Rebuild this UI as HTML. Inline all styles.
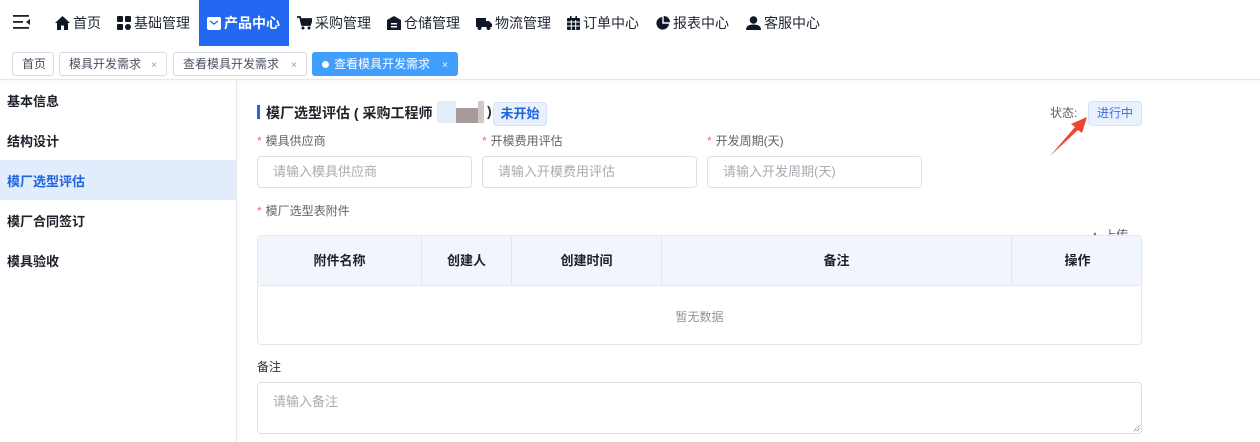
<!DOCTYPE html>
<html><head><meta charset="utf-8"><style>
*{margin:0;padding:0;box-sizing:border-box}
body{width:1260px;height:442px;overflow:hidden;background:#fff;font-family:"Liberation Sans","Noto Sans CJK SC",sans-serif;position:relative;color:#303133}
.a{position:absolute}
.nav{font-size:14px;color:#1f2530;top:0;height:46px;line-height:44px;display:flex;align-items:center}
.nav svg{margin-right:3px;vertical-align:-2px}
.tab{position:absolute;top:52px;height:24px;border:1px solid #d8dce5;border-radius:3px;font-size:12px;line-height:22px;color:#495060;padding-left:9px;background:#fff}
.tab .x{position:absolute;right:9px;top:2px;font-size:10px;color:#999}
.side{font-size:13px;font-weight:bold;color:#1d2129;left:7px}
.lbl{font-size:12px;color:#606266;top:132px}
.lbl b{color:#f56c6c;font-weight:normal;margin-right:4px}
.inp{top:156px;width:215px;height:32px;border:1px solid #dcdfe6;border-radius:4px;font-size:13px;color:#a8abb2;line-height:30px;padding-left:15px}
.th{top:235px;height:50px;line-height:50px;font-size:13px;font-weight:bold;color:#1d2129;text-align:center;border-right:1px solid #e4e7ed;background:#f1f5fc}
</style></head><body>
<div class="a" style="left:13px;top:15px">
<svg width="18" height="14" viewBox="0 0 18 14"><rect x="0" y="0" width="16" height="1.8" fill="#222"/><rect x="0" y="6" width="10" height="1.8" fill="#222"/><rect x="0" y="12" width="16" height="1.8" fill="#222"/><path d="M17 4 L13 7 L17 10Z" fill="#222"/></svg></div>
<div class="a nav" style="left:55px"><svg width="15" height="14" viewBox="0 0 15 14"><path d="M7.5 0 L15 7 H13 V14 H9 V9.5 H6 V14 H2 V7 H0Z" fill="#101828"/></svg>首页</div>
<div class="a nav" style="left:117px"><svg width="14" height="14" viewBox="0 0 14 14"><rect x="0" y="0" width="6" height="6" rx="1" fill="#101828"/><rect x="8" y="0" width="6" height="6" rx="1" fill="#101828"/><rect x="0" y="8" width="6" height="6" rx="1" fill="#101828"/><circle cx="11" cy="11" r="3" fill="#101828"/></svg>基础管理</div>
<div class="a" style="left:199px;top:0;width:90px;height:46px;background:#2468f2"></div>
<div class="a nav" style="left:207px;color:#fff;font-weight:bold"><svg width="14" height="13" viewBox="0 0 14 13"><rect x="0" y="0" width="14" height="13" rx="2" fill="#fff"/><path d="M3 4 L7 7 L11 4" stroke="#2468f2" stroke-width="1.4" fill="none"/></svg>产品中心</div>
<div class="a nav" style="left:297px"><svg width="15" height="14" viewBox="0 0 15 14"><path d="M0 1 H3 L5 9 H13 L15 3 H4" stroke="#101828" stroke-width="1.8" fill="none"/><path d="M4 3 H15 L13 9 H5Z" fill="#101828"/><circle cx="6" cy="12" r="1.5" fill="#101828"/><circle cx="12" cy="12" r="1.5" fill="#101828"/></svg>采购管理</div>
<div class="a nav" style="left:387px"><svg width="14" height="14" viewBox="0 0 14 14"><path d="M7 0 L14 4 V14 H0 V4Z" fill="#101828"/><rect x="4" y="7" width="6" height="1.5" fill="#fff"/><rect x="4" y="10" width="6" height="1.5" fill="#fff"/></svg>仓储管理</div>
<div class="a nav" style="left:476px"><svg width="16" height="13" viewBox="0 0 16 13"><path d="M0 1 H10 V10 H0Z M10 4 H13 L16 7 V10 H10Z" fill="#101828"/><circle cx="3.5" cy="11" r="2" fill="#101828"/><circle cx="12.5" cy="11" r="2" fill="#101828"/></svg>物流管理</div>
<div class="a nav" style="left:567px"><svg width="13" height="14" viewBox="0 0 13 14"><rect x="0" y="2" width="13" height="12" rx="1" fill="#101828"/><rect x="3" y="0" width="1.6" height="3" fill="#101828"/><rect x="8.4" y="0" width="1.6" height="3" fill="#101828"/><path d="M0 6 H13 M0 10 H13 M4.3 4 V14 M8.7 4 V14" stroke="#fff" stroke-width="1"/></svg>订单中心</div>
<div class="a nav" style="left:656px"><svg width="14" height="14" viewBox="0 0 14 14"><path d="M6.3 1 A6.3 6.3 0 1 0 13 7.7 H6.3Z" fill="#101828"/><path d="M7.7 0 A6.3 6.3 0 0 1 14 6.3 H7.7Z" fill="#101828"/></svg>报表中心</div>
<div class="a nav" style="left:746px"><svg width="15" height="14" viewBox="0 0 15 14"><circle cx="7.5" cy="4" r="3.8" fill="#101828"/><path d="M0 14 Q0 8.5 7.5 8.5 Q15 8.5 15 14Z" fill="#101828"/></svg>客服中心</div>

<div class="tab" style="left:12px;width:42px">首页</div>
<div class="tab" style="left:59px;width:108px">模具开发需求<span class="x">×</span></div>
<div class="tab" style="left:173px;width:134px">查看模具开发需求<span class="x">×</span></div>
<div class="tab" style="left:312px;width:146px;background:#409eff;border-color:#409eff;color:#fff"><span style="display:inline-block;width:7px;height:7px;border-radius:50%;background:#fff;margin-right:5px;vertical-align:0"></span>查看模具开发需求<span class="x" style="color:#fff">×</span></div>
<div class="a" style="left:0;top:79px;width:1260px;height:1px;background:#e4e7ed;box-shadow:0 1px 3px rgba(0,0,0,.08)"></div>

<div class="a" style="left:236px;top:80px;width:1px;height:362px;background:#e6e8ec"></div>
<div class="a" style="left:0;top:160px;width:236px;height:40px;background:#e1ecfd"></div>
<div class="a side" style="top:91px">基本信息</div>
<div class="a side" style="top:131px">结构设计</div>
<div class="a side" style="top:171px;color:#1f64dc">模厂选型评估</div>
<div class="a side" style="top:211px">模厂合同签订</div>
<div class="a side" style="top:251px">模具验收</div>

<div class="a" style="left:257px;top:105px;width:3px;height:14px;background:#1f64dc"></div>
<div class="a" style="left:266px;top:103px;font-size:14px;font-weight:bold;color:#1d2129">模厂选型评估 ( 采购工程师 ·</div>
<div class="a" style="left:437px;top:101px;width:19px;height:22px;background:#e2eefa"></div>
<div class="a" style="left:456px;top:108px;width:22px;height:15px;background:#a89a9a"></div>
<div class="a" style="left:478px;top:101px;width:6px;height:22px;background:#d0c8c8"></div>
<div class="a" style="left:487px;top:103px;font-size:14px;font-weight:bold">)</div>
<div class="a" style="left:493px;top:102px;width:54px;height:24px;background:#e8f0fe;border:1px solid #d4e2fb;border-radius:4px;color:#1f64dc;font-size:13px;font-weight:bold;text-align:center;line-height:22px">未开始</div>

<div class="a" style="left:1050px;top:104px;font-size:12px;color:#606266">状态:</div>
<div class="a" style="left:1088px;top:101px;width:54px;height:25px;background:#eaf1fe;border:1px solid #d4e2fb;border-radius:4px;color:#3a6fe0;font-size:12px;text-align:center;line-height:23px">进行中</div>
<svg class="a" style="left:1045px;top:113px" width="45" height="45" viewBox="0 0 45 45"><path d="M5 43 L30 14 L26 11 L42 4 L37 20 L33 17 Z" fill="#ee4433"/></svg>

<div class="a lbl" style="left:257px"><b>*</b>模具供应商</div>
<div class="a lbl" style="left:482px"><b>*</b>开模费用评估</div>
<div class="a lbl" style="left:707px"><b>*</b>开发周期(天)</div>
<div class="a inp" style="left:257px">请输入模具供应商</div>
<div class="a inp" style="left:482px">请输入开模费用评估</div>
<div class="a inp" style="left:707px">请输入开发周期(天)</div>
<div class="a lbl" style="left:257px;top:202px"><b>*</b>模厂选型表附件</div>

<div class="a" style="left:1089px;top:226px;font-size:12px;color:#606266">▲ 上传</div>
<div class="a" style="left:257px;top:235px;width:885px;height:110px;border:1px solid #e4e7ed;border-radius:4px;background:#fff;overflow:hidden">
<div class="a th" style="left:0;width:164px;top:0">附件名称</div>
<div class="a th" style="left:164px;width:90px;top:0">创建人</div>
<div class="a th" style="left:254px;width:150px;top:0">创建时间</div>
<div class="a th" style="left:404px;width:350px;top:0">备注</div>
<div class="a th" style="left:754px;width:131px;top:0;border-right:0">操作</div>
<div class="a" style="left:0;top:49px;width:885px;height:1px;background:#e4e7ed"></div>
<div class="a" style="left:0;top:72px;width:883px;text-align:center;font-size:12px;color:#909399">暂无数据</div>
</div>

<div class="a" style="left:257px;top:358px;font-size:12px;color:#303133">备注</div>
<div class="a" style="left:257px;top:382px;width:885px;height:52px;border:1px solid #dcdfe6;border-radius:4px;font-size:13px;color:#a8abb2;padding:8px 15px">请输入备注</div>
<svg class="a" style="left:1133px;top:424px" width="8" height="8" viewBox="0 0 8 8"><path d="M1 7 L7 1 M4 7 L7 4" stroke="#666" stroke-width="1" stroke-dasharray="1 1"/></svg>
</body></html>
